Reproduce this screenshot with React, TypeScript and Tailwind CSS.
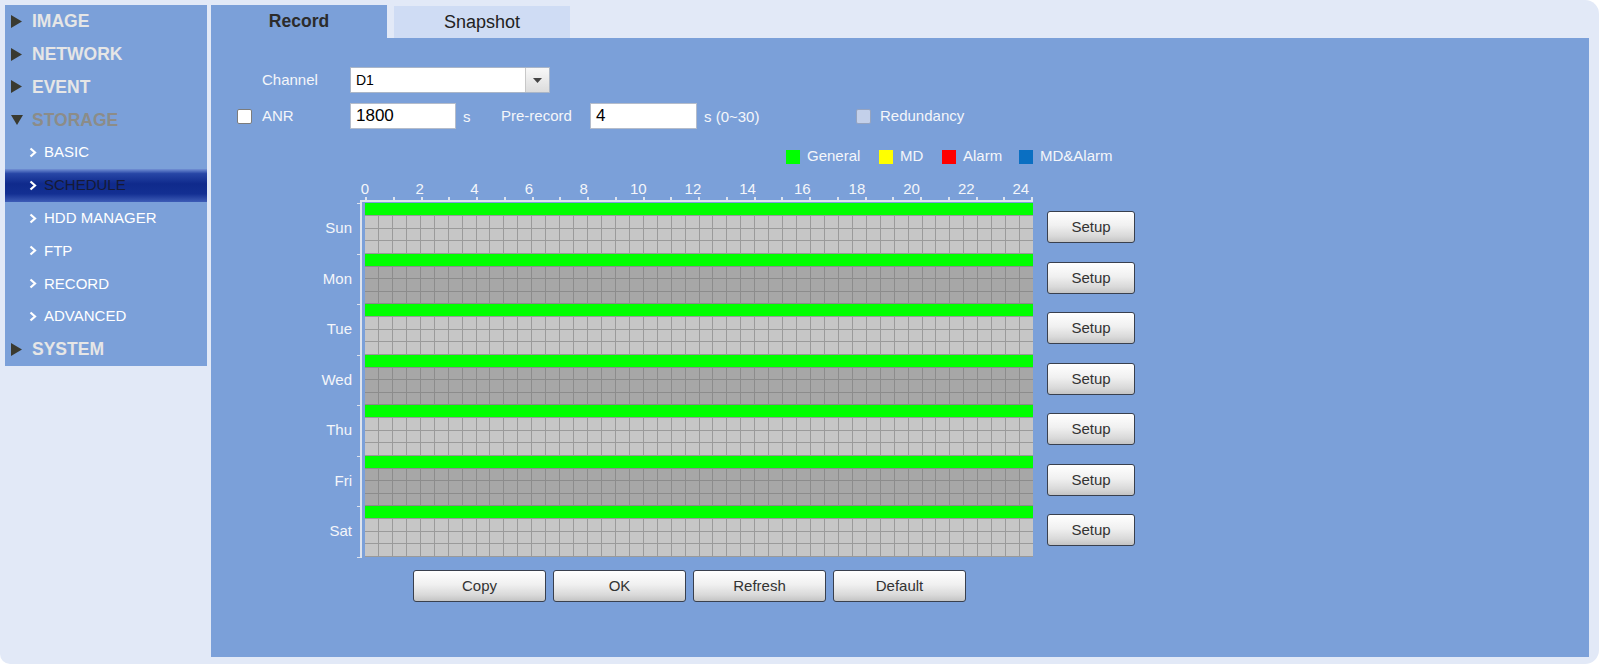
import React from 'react'

type MenuItem = { label: string; kind: 'head' | 'open' | 'sub'; active?: boolean }

const MENU: MenuItem[] = [
  { label: 'IMAGE', kind: 'head' },
  { label: 'NETWORK', kind: 'head' },
  { label: 'EVENT', kind: 'head' },
  { label: 'STORAGE', kind: 'open' },
  { label: 'BASIC', kind: 'sub' },
  { label: 'SCHEDULE', kind: 'sub', active: true },
  { label: 'HDD MANAGER', kind: 'sub' },
  { label: 'FTP', kind: 'sub' },
  { label: 'RECORD', kind: 'sub' },
  { label: 'ADVANCED', kind: 'sub' },
  { label: 'SYSTEM', kind: 'head' },
]

const DAYS = ['Sun', 'Mon', 'Tue', 'Wed', 'Thu', 'Fri', 'Sat']
const HOURS = [0, 2, 4, 6, 8, 10, 12, 14, 16, 18, 20, 22, 24]
const CELLS = Array.from({ length: 144 }, (_, i) => i)
const TICKS = Array.from({ length: 25 }, (_, i) => i)

const LEGEND = [
  { label: 'General', color: 'bg-[#00ff00]', w: 'w-[93px]' },
  { label: 'MD', color: 'bg-[#ffff00]', w: 'w-[63px]' },
  { label: 'Alarm', color: 'bg-[#ff0000]', w: 'w-[77px]' },
  { label: 'MD&Alarm', color: 'bg-[#0a6fc2]', w: 'w-[100px]' },
]

function Chevron() {
  return (
    <svg width="8" height="11" viewBox="0 0 8 11" className="shrink-0">
      <path d="M1.5 1.5 L6 5.5 L1.5 9.5" stroke="#ffffff" strokeWidth="2.2" fill="none" />
    </svg>
  )
}

function SideRow({ item }: { item: MenuItem }) {
  if (item.kind === 'sub') {
    return (
      <div
        className={`h-[32.8px] flex items-center pl-[24px] text-[15px] ${
          item.active
            ? 'bg-[linear-gradient(to_bottom,#7290d4_0%,#2746a6_14%,#0f2a8c_45%,#132f92_75%,#3d5cb6_100%)] text-[#161a36]'
            : 'text-white'
        }`}
      >
        <Chevron />
        <span className="ml-[7px]">{item.label}</span>
      </div>
    )
  }
  const open = item.kind === 'open'
  return (
    <div className="h-[32.8px] flex items-center pl-[6px] text-[17.5px] font-bold">
      <svg width="12" height="13" viewBox="0 0 12 13" className="shrink-0">
        {open ? <path d="M0 2 L12 2 L6 12 Z" fill="#3a3a30" /> : <path d="M0 0 L11 6.5 L0 13 Z" fill="#3a3a30" />}
      </svg>
      <span className={`ml-[9px] ${open ? 'text-[#8c8c88]' : 'text-[#e6e6e6]'}`}>{item.label}</span>
    </div>
  )
}

function Btn({ label, w }: { label: string; w: string }) {
  return (
    <div
      className={`${w} h-[32px] shrink-0 flex items-center justify-center rounded-[3px] border border-[#39404e] bg-[linear-gradient(to_bottom,#ffffff_0%,#f0f0f0_45%,#d9d9d9_80%,#c4c4c4_100%)] text-[15px] text-[#333]`}
    >
      {label}
    </div>
  )
}

function DayRow({ day, idx }: { day: string; idx: number }) {
  const light = idx % 2 === 0
  return (
    <div className={`flex ${light ? 'h-[51px]' : 'h-[50px]'}`}>
      <div className="w-[141px] flex items-center justify-end text-[15px] text-[#f4f6fa]">{day}</div>
      <div className="w-[8px] flex flex-col">
        <div className="h-px w-[3px] ml-auto bg-[#dde3ee]" />
      </div>
      <div className="w-[2px] bg-[#dde3ee]" />
      <div className="w-[3px]" />
      <div className={`w-[668px] flex flex-col ${light ? 'bg-[#9a9a9a]' : 'bg-[#8c8c8c]'}`}>
        <div className="h-[12px] bg-[#00ff00]" />
        <div className="flex-1 grid grid-cols-[repeat(48,minmax(0,1fr))] grid-rows-3 gap-px py-px">
          {CELLS.map(c => (
            <div key={c} className={light ? 'bg-[#c6c6c6]' : 'bg-[#a7a7a7]'} />
          ))}
        </div>
      </div>
      <div className="ml-[14px] mt-[8px]">
        <Btn label="Setup" w="w-[88px]" />
      </div>
    </div>
  )
}

export default function App() {
  return (
    <div className="w-[1604px] h-[664px] bg-white font-['Liberation_Sans',Arial,sans-serif]">
      <div className="w-[1599px] h-[664px] bg-[#e2e9f7] rounded-r-[14px] rounded-bl-[10px] flex pl-[5px] pt-[5px]">
        {/* sidebar */}
        <div className="w-[202px] h-[361px] bg-[#7ba0d9] flex flex-col">
          {MENU.map(m => (
            <SideRow key={m.label} item={m} />
          ))}
        </div>

        {/* main */}
        <div className="ml-[4px] w-[1378px] h-[652px] flex flex-col">
          <div className="h-[33px] flex items-stretch">
            <div className="w-[176px] bg-[#7ba0d9] flex items-center justify-center text-[17.5px] font-bold text-[#2c2c2c]">
              Record
            </div>
            <div className="ml-[7px] mt-px w-[176px] bg-[#cfdcf4] flex items-center justify-center text-[18px] text-[#222]">
              Snapshot
            </div>
          </div>

          <div className="flex-1 bg-[#7ba0d9] flex flex-col text-[15px] text-[#f4f6fa]">
            {/* channel */}
            <div className="mt-[29px] h-[26px] flex items-center">
              <div className="w-[139px] pl-[51px]">Channel</div>
              <div className="w-[200px] h-[26px] bg-white border border-[#aab6c8] flex">
                <span className="flex-1 pl-[5px] flex items-center text-[14px] text-black">D1</span>
                <div className="w-[24px] border-l border-[#c8c8c8] bg-[linear-gradient(to_bottom,#f8f8f8,#dcdcdc)] flex items-center justify-center">
                  <svg width="9" height="5" viewBox="0 0 9 5">
                    <path d="M0 0 L9 0 L4.5 5 Z" fill="#444" />
                  </svg>
                </div>
              </div>
            </div>

            {/* anr / pre-record */}
            <div className="mt-[10px] h-[26px] flex items-center">
              <div className="w-[139px] pl-[26px] flex items-center">
                <div className="w-[15px] h-[15px] bg-white border border-[#7c7c7c] rounded-[2px]" />
                <span className="ml-[10px]">ANR</span>
              </div>
              <div className="w-[106px] h-[26px] bg-white border border-[#b4bccb] pl-[5px] flex items-center text-[17px] text-black">
                1800
              </div>
              <span className="w-[45px] pl-[7px] pt-[3px]">s</span>
              <span className="w-[89px]">Pre-record</span>
              <div className="w-[107px] h-[26px] bg-white border border-[#b4bccb] pl-[5px] flex items-center text-[17px] text-black">
                4
              </div>
              <span className="w-[159px] pl-[7px] pt-[2px]">s (0~30)</span>
              <div className="w-[15px] h-[15px] bg-[#c3d0ea] border border-[#94a3c0] rounded-[2px]" />
              <span className="ml-[9px]">Redundancy</span>
            </div>

            {/* legend */}
            <div className="mt-[20px] h-[15px] ml-[575px] flex items-center">
              {LEGEND.map(l => (
                <div key={l.label} className={`${l.w} flex items-center`}>
                  <div className={`w-[14px] h-[14px] ${l.color}`} />
                  <span className="ml-[7px]">{l.label}</span>
                </div>
              ))}
            </div>

            {/* schedule chart */}
            <div className="mt-[16px] flex flex-col">
              <div className="flex h-[17px]">
                <div className="w-[139px]" />
                <div className="w-[686px] flex justify-between leading-[17px]">
                  {HOURS.map(h => (
                    <span key={h} className="w-[30px] text-center">
                      {h}
                    </span>
                  ))}
                </div>
              </div>
              <div className="flex h-[3px]">
                <div className="w-[154px]" />
                <div className="w-[668px] flex justify-between">
                  {TICKS.map(t => (
                    <div key={t} className="w-[2px] h-[3px] bg-[#dde3ee]" />
                  ))}
                </div>
              </div>
              <div className="flex h-[2px]">
                <div className="w-[149px]" />
                <div className="w-[673px] bg-[#dde3ee]" />
              </div>
              <div className="h-px flex">
                <div className="w-[149px]" />
                <div className="w-[2px] bg-[#dde3ee]" />
              </div>
              {DAYS.map((d, i) => (
                <DayRow key={d} day={d} idx={i} />
              ))}
              <div className="h-px flex">
                <div className="w-[146px]" />
                <div className="w-[5px] bg-[#dde3ee]" />
              </div>
            </div>

            {/* actions */}
            <div className="mt-[12px] ml-[202px] flex gap-[7px]">
              <Btn label="Copy" w="w-[133px]" />
              <Btn label="OK" w="w-[133px]" />
              <Btn label="Refresh" w="w-[133px]" />
              <Btn label="Default" w="w-[133px]" />
            </div>
          </div>
        </div>
      </div>
    </div>
  )
}
